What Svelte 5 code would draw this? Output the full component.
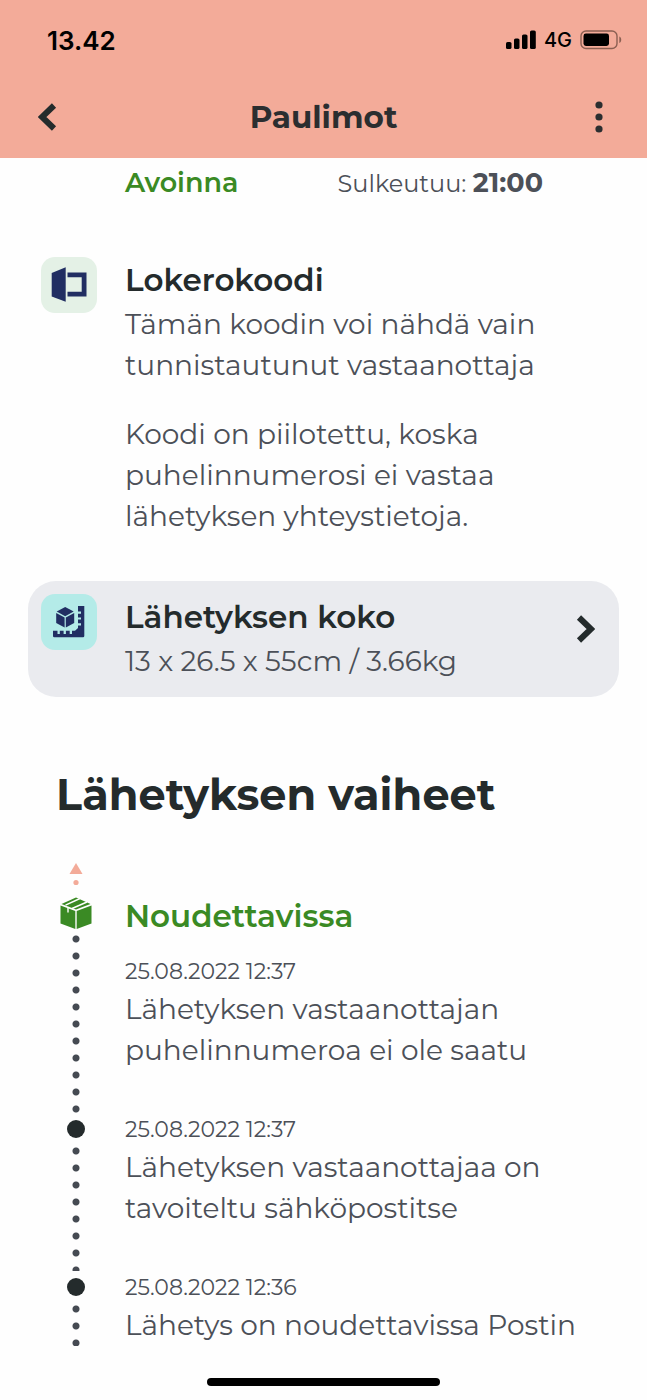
<script>
  const details = {
    locker: {
      title: "Lokerokoodi",
      paragraphs: [
        ["Tämän koodin voi nähdä vain", "tunnistautunut vastaanottaja"],
        [
          "Koodi on piilotettu, koska",
          "puhelinnumerosi ei vastaa",
          "lähetyksen yhteystietoja.",
        ],
      ],
    },
    size: { title: "Lähetyksen koko", value: "13 x 26.5 x 55cm / 3.66kg" },
  };

  const steps = [
    {
      status: "Noudettavissa",
      time: "25.08.2022 12:37",
      lines: ["Lähetyksen vastaanottajan", "puhelinnumeroa ei ole saatu"],
    },
    {
      time: "25.08.2022 12:37",
      lines: ["Lähetyksen vastaanottajaa on", "tavoiteltu sähköpostitse"],
    },
    { time: "25.08.2022 12:36", lines: ["Lähetys on noudettavissa Postin"] },
  ];
</script>

<div class="screen">
  <header>
    <div class="status-bar">
      <span class="clock">13.42</span>
      <div class="signals">
        <svg width="30" height="20" viewBox="0 0 30 20" aria-hidden="true">
          <rect x="0" y="12" width="5.5" height="7" rx="1.6" />
          <rect x="8" y="8.5" width="5.5" height="10.5" rx="1.6" />
          <rect x="16" y="4.5" width="5.5" height="14.5" rx="1.6" />
          <rect x="24" y="0.5" width="5.8" height="18.5" rx="1.6" />
        </svg>
        <span>4G</span>
        <svg width="42" height="20" viewBox="0 0 42 20" aria-hidden="true">
          <rect x="1" y="1" width="36" height="17.5" rx="5" fill="none" stroke="#8b5f52" stroke-width="1.4" />
          <rect x="3.5" y="3.5" width="25.5" height="12.5" rx="2.4" />
          <path d="M39.3 6.6c2.6.8 2.6 5.6 0 6.4z" fill="#8b5f52" />
        </svg>
      </div>
    </div>
    <div class="app-bar">
      <button class="icon-button back" aria-label="Takaisin">
        <svg width="20" height="28" viewBox="0 0 20 28">
          <path d="M16 2.5 4 14l12 11.5" fill="none" stroke="#242b2c" stroke-width="6" />
        </svg>
      </button>
      <h1>Paulimot</h1>
      <button class="icon-button more" aria-label="Valikko">
        <svg width="8" height="32" viewBox="0 0 8 32">
          <circle cx="4" cy="4" r="3.6" />
          <circle cx="4" cy="16" r="3.6" />
          <circle cx="4" cy="28" r="3.6" />
        </svg>
      </button>
    </div>
  </header>

  <main>
    <div class="hours">
      <span class="open">Avoinna</span>
      <span class="closes">Sulkeutuu: <strong>21:00</strong></span>
    </div>

    <section class="row">
      <div class="tile green">
        <svg width="36" height="36" viewBox="0 0 36 36" aria-hidden="true">
          <path d="M.7 6 14.7.3v34.4L.7 29.5z" />
          <path d="M16.5 5.5h19v24h-19v-4.8h14.2V10.3H16.5z" />
        </svg>
      </div>
      <div class="text">
        <h3>{details.locker.title}</h3>
        {#each details.locker.paragraphs as lines}
          <p>
            {#each lines as line}
              <span class="line">{line}</span>
            {/each}
          </p>
        {/each}
      </div>
    </section>

    <button class="row card">
      <span class="tile blue">
        <svg width="34" height="34" viewBox="0 0 34 34" aria-hidden="true">
          <path d="M13.2 2 21.7 6.600l-8.500 4.600L4.700 6.600z" />
          <path d="M4.200 7.900l8.400 4.500v10.200L4.200 18z" />
          <path d="M22.200 7.900l-8.400 4.500v10.200l8.400-4.600z" />
          <path
            d="M26 1h6.300v30q0 1.300-1.300 1.300H2.300Q1 32.300 1 31V25.700h4.500V29h2.300v-3.300h3.800V29h2.300v-3.300h3.800V29H20v-3.300h3l3-2.700v-2.600h3v-2.200h-3v-3.600h3v-2.200h-3V8.800h3V6.600h-3z"
          />
        </svg>
      </span>
      <span class="text">
        <span class="card-title">{details.size.title}</span>
        <span class="card-value">{details.size.value}</span>
      </span>
      <svg class="chevron" width="20" height="28" viewBox="0 0 20 28" aria-hidden="true">
        <path d="M4 2.5 16 14 4 25.5" fill="none" stroke="#242b2c" stroke-width="6" />
      </svg>
    </button>

    <h2>Lähetyksen vaiheet</h2>

    <div class="upcoming">
      <svg width="14" height="26" viewBox="0 0 14 26" aria-hidden="true">
        <path d="M7 2 13.5 13H.5z" />
        <circle cx="7" cy="21.5" r="2.6" />
      </svg>
    </div>

    <ol>
      {#each steps as step}
        <li>
          <div class="rail">
            {#if step.status}
              <svg class="box" width="32" height="32" viewBox="0 0 32 32" aria-hidden="true">
                <path d="M.5 8.6 15.3 14v18L.5 26.4z" />
                <path d="M31.5 8.6 16.7 14v18l14.8-5.6z" />
                <path d="M16 .5 30.500 7 16 12.5 1.5 7z" />
                <path d="M20 1.500 5.500 8.200M27 5 12 11.500M8 10v5.500" fill="none" stroke="#fff" stroke-width="1.4" />
              </svg>
            {:else}
              <span class="dot"></span>
            {/if}
            <span class="dots"></span>
          </div>
          <div class="text">
            {#if step.status}
              <h3>{step.status}</h3>
            {/if}
            <time>{step.time}</time>
            <p>
              {#each step.lines as line}
                <span class="line">{line}</span>
              {/each}
            </p>
          </div>
        </li>
      {/each}
    </ol>
  </main>

  <footer><span class="home"></span></footer>
</div>

<style>
  :global(body) {
    background: #fefefe;
  }

  .screen {
    display: flex;
    flex-direction: column;
    min-height: 100vh;
    font-family: Montserrat, Inter, "Noto Sans", sans-serif;
    color: #4c5058;
    font-size: 28px;
    line-height: 41px;
  }

  h1,
  h2,
  h3,
  p,
  ol {
    margin: 0;
    padding: 0;
  }

  button {
    border: 0;
    font: inherit;
    color: inherit;
    cursor: pointer;
  }

  header {
    background: #f3ab99;
  }

  .status-bar {
    display: flex;
    justify-content: space-between;
    align-items: center;
    height: 80px;
    padding: 0 25px 0 47px;
    color: #000;
    font-family: Inter, sans-serif;
  }

  .clock {
    font-size: 26px;
    font-weight: 600;
  }

  .signals {
    display: flex;
    align-items: center;
    gap: 8px;
    font-size: 20px;
    font-weight: 500;
  }

  .app-bar {
    display: grid;
    grid-template-columns: 64px 1fr 64px;
    align-items: center;
    height: 74px;
    padding: 0 16px 4px;
  }

  .icon-button {
    display: flex;
    align-items: center;
    justify-content: center;
    height: 48px;
    padding: 0;
    background: none;
  }

  .more {
    fill: #2b2e30;
  }

  h1 {
    color: #2b2e30;
    font-size: 31px;
    font-weight: 700;
    text-align: center;
  }

  main {
    padding: 0 28px;
  }

  .hours {
    display: flex;
    justify-content: space-between;
    padding: 4px 76px 0 97px;
    font-size: 27px;
  }

  .open {
    color: #3a8a24;
    font-weight: 600;
  }

  .closes {
    font-size: 24px;
  }

  .closes strong {
    font-size: 27px;
    font-weight: 700;
  }

  .row {
    display: flex;
    gap: 28px;
    padding: 13px;
  }

  section.row {
    margin-top: 40px;
  }

  .tile {
    flex: none;
    display: flex;
    align-items: center;
    justify-content: center;
    width: 56px;
    height: 56px;
    border-radius: 14px;
    fill: #212e62;
  }

  .green {
    background: #e4f1e6;
  }

  .blue {
    background: #b4ebe8;
  }

  .text {
    flex: 1;
  }

  h3,
  .card-title {
    color: #242b2c;
    font-size: 31px;
    font-weight: 600;
    line-height: 47px;
  }

  p + p {
    margin-top: 28px;
  }

  .line,
  .card-title,
  .card-value {
    display: block;
  }

  .card {
    width: 100%;
    margin-top: 31px;
    padding-bottom: 15px;
    border-radius: 28px;
    background: #eaebef;
    text-align: left;
  }

  .chevron {
    margin: 21px 11px 0 0;
  }

  h2 {
    margin: 68px 28px 0;
    color: #242b2c;
    font-size: 43px;
    font-weight: 700;
    line-height: 60px;
  }

  .upcoming {
    display: flex;
    justify-content: center;
    width: 40px;
    margin: 36px 0 0 28px;
    fill: #f3ab99;
  }

  ol {
    margin-top: 9px;
    list-style: none;
  }

  li {
    display: flex;
    gap: 29px;
    padding-left: 28px;
  }

  .rail {
    display: flex;
    flex-direction: column;
    align-items: center;
    width: 40px;
  }

  .box {
    flex: none;
    margin: 1px 0;
    fill: #3a8a24;
  }

  .dot {
    flex: none;
    width: 18px;
    height: 18px;
    margin: 7px 0 4px;
    border-radius: 50%;
    background: #242b2c;
  }

  .dots {
    flex: 1;
    width: 8px;
    margin-top: 2px;
    background: radial-gradient(circle at 4px 7px, #454a52 3px, transparent 4px) 0 0 / 8px 17px;
  }

  li .text {
    padding-bottom: 42px;
  }

  li:last-child .text {
    padding-bottom: 0;
  }

  li h3 {
    margin-bottom: 19px;
    color: #3a8a24;
    line-height: 40px;
  }

  time {
    display: block;
    font-size: 22px;
    line-height: 34px;
  }

  footer {
    display: flex;
    justify-content: center;
    margin-top: auto;
    padding-bottom: 14px;
  }

  .home {
    width: 36%;
    height: 8px;
    border-radius: 4px;
    background: #000;
  }
</style>
